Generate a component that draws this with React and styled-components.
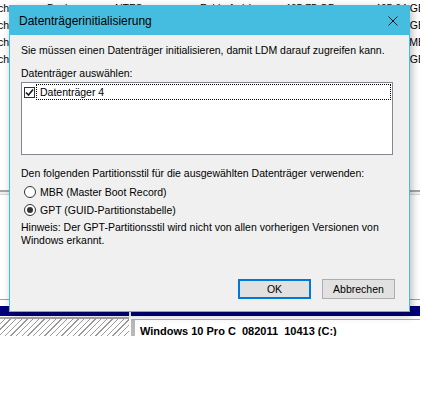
import React from "react";
import styled, { createGlobalStyle } from "styled-components";

const GlobalStyle = createGlobalStyle`
  body {
    margin: 0;
    background: #ffffff;
    font-family: "Liberation Sans", Arial, sans-serif;
  }
`;

const volumes = [
  { layout: "Einfach", type: "Basis", fs: "NTFS", status: "Fehlerfrei (...", cap: "465,75 GB", free: "465,64 GB" },
  { layout: "Einfach", type: "Basis", fs: "NTFS", status: "Fehlerfrei (...", cap: "931,39 GB", free: "512,18 GB" },
  { layout: "Einfach", type: "Basis", fs: "NTFS", status: "Fehlerfrei (...", cap: "350 MB", free: "318 MB" },
  { layout: "Einfach", type: "Basis", fs: "NTFS", status: "Fehlerfrei (...", cap: "1863,01 GB", free: "1201,44 GB" },
];

const App = () => {
  return (
    <Stage>
      <GlobalStyle />
      <BackWindow>
        <VolumeList>
          {volumes.map((v, i) => (
            <VolumeRow key={i}>
              <LayoutCell>
                <span>{v.layout}</span>
              </LayoutCell>
              <Cell>{v.type}</Cell>
              <Cell>{v.fs}</Cell>
              <Cell>{v.status}</Cell>
              <Cell right>{v.cap}</Cell>
              <Cell right>{v.free}</Cell>
            </VolumeRow>
          ))}
        </VolumeList>
        <Splitter />
        <DiskPane>
          <DiskLine />
          <DiskRow>
            <Partition width="129px">
              <PartHead />
              <HatchBody />
            </Partition>
            <Partition>
              <PartHead />
              <VolumeBody>
                <VolumeBox>Windows 10 Pro C_082011_10413 (C:)</VolumeBox>
              </VolumeBody>
            </Partition>
          </DiskRow>
        </DiskPane>
      </BackWindow>

      <Dialog>
        <TitleBar>
          <Title>Datenträgerinitialisierung</Title>
          <svg width="10" height="10" viewBox="0 0 10 10">
            <path d="M0.5 0.5 L9.5 9.5 M9.5 0.5 L0.5 9.5" stroke="#1a1a1a" strokeWidth="1" fill="none" />
          </svg>
        </TitleBar>
        <Body>
          <Text top="9px">Sie müssen einen Datenträger initialisieren, damit LDM darauf zugreifen kann.</Text>
          <Text top="10px">Datenträger auswählen:</Text>
          <ListBox>
            <ListItem>
              <CheckBox>
                <svg width="9" height="9" viewBox="0 0 9 9">
                  <path d="M1 4.5 L3.5 7 L8 1.5" stroke="#1a1a1a" strokeWidth="1.6" fill="none" />
                </svg>
              </CheckBox>
              <FocusLabel>Datenträger 4</FocusLabel>
            </ListItem>
          </ListBox>
          <Text top="12px">Den folgenden Partitionsstil für die ausgewählten Datenträger verwenden:</Text>
          <RadioGroup>
            <RadioRow>
              <Radio />
              MBR (Master Boot Record)
            </RadioRow>
            <RadioRow>
              <Radio checked />
              GPT (GUID-Partitionstabelle)
            </RadioRow>
          </RadioGroup>
          <Text top="2px">
            Hinweis: Der GPT-Partitionsstil wird nicht von allen vorherigen Versionen von
            <br />
            Windows erkannt.
          </Text>
          <ButtonRow>
            <Button primary>OK</Button>
            <Button>Abbrechen</Button>
          </ButtonRow>
        </Body>
      </Dialog>
    </Stage>
  );
};

const Stage = styled.div`
  position: relative;
  width: 434px;
  height: 403px;
  overflow: hidden;
`;

const BackWindow = styled.div`
  width: 420px;
  height: 336px;
  overflow: hidden;
  display: flex;
  flex-direction: column;
  background: #ffffff;
`;

const VolumeList = styled.div`
  width: 425px;
  height: 190px;
  flex-shrink: 0;
`;

const VolumeRow = styled.div`
  display: grid;
  grid-template-columns: 47px 68px 85px 77px 58px 1fr;
  height: 17px;
  line-height: 17px;
  font-size: 10.5px;
  color: #000;
`;

const Cell = styled.div`
  white-space: nowrap;
  overflow: hidden;
  text-align: ${(p) => (p.right ? "right" : "left")};
`;

const LayoutCell = styled.div`
  display: flex;
  justify-content: flex-end;
  padding-right: 38px;
  white-space: nowrap;
  overflow: hidden;
`;

const Splitter = styled.div`
  height: 5px;
  flex-shrink: 0;
  background: #f0f0f0;
  border-top: 2px solid #a6a6a6;
  border-bottom: 1px solid #d6d6d6;
  box-sizing: border-box;
`;

const DiskPane = styled.div`
  flex: 1;
  display: flex;
  flex-direction: column;
  padding-top: 104px;
`;

const DiskLine = styled.div`
  height: 1px;
  background: #a0a0a0;
  margin-bottom: 6px;
`;

const DiskRow = styled.div`
  flex: 1;
  display: flex;
  gap: 2px;
`;

const Partition = styled.div`
  display: flex;
  flex-direction: column;
  width: ${(p) => p.width || "auto"};
  flex: ${(p) => (p.width ? "none" : "1")};
`;

const PartHead = styled.div`
  height: 10px;
  background: #00007d;
`;

const HatchBody = styled.div`
  flex: 1;
  border-top: 2px solid #a8a8a8;
  margin-top: 1px;
  background: repeating-linear-gradient(
    135deg,
    #ffffff 0px,
    #ffffff 3px,
    #9a9a9a 3px,
    #9a9a9a 4px
  );
`;

const VolumeBody = styled.div`
  flex: 1;
  padding-top: 3px;
`;

const VolumeBox = styled.div`
  height: 100%;
  box-sizing: border-box;
  border-top: 1px solid #b0b0b0;
  border-left: 4px solid #b8b8b8;
  padding: 4px 0 0 5px;
  font-weight: bold;
  font-size: 11px;
  line-height: 15px;
  white-space: nowrap;
  overflow: hidden;
  color: #000;
`;

const Dialog = styled.div`
  position: absolute;
  left: 9px;
  top: 5px;
  width: 401px;
  height: 307px;
  box-sizing: border-box;
  border: 1px solid #45bde0;
  background: #f0f0f0;
  display: flex;
  flex-direction: column;
  box-shadow: 2px 3px 8px rgba(0, 0, 0, 0.28);
`;

const TitleBar = styled.div`
  height: 29px;
  flex-shrink: 0;
  background: #45bde0;
  display: flex;
  align-items: center;
  justify-content: space-between;
  padding: 0 11px 0 9px;
`;

const Title = styled.div`
  font-size: 12px;
  color: #000;
`;

const Body = styled.div`
  flex: 1;
  display: flex;
  flex-direction: column;
  padding: 0 16px 12px 11px;
  font-size: 10.5px;
  color: #000;
`;

const Text = styled.div`
  margin-top: ${(p) => p.top};
  line-height: 13px;
  white-space: nowrap;
`;

const ListBox = styled.div`
  margin-top: 2px;
  height: 73px;
  box-sizing: border-box;
  border: 1px solid #828790;
  background: #ffffff;
  padding: 1px 1px 0 2px;
`;

const ListItem = styled.div`
  display: flex;
  align-items: center;
  height: 16px;
  gap: 1px;
`;

const CheckBox = styled.div`
  width: 11px;
  height: 11px;
  box-sizing: border-box;
  border: 1px solid #333;
  background: #fff;
  display: flex;
  align-items: center;
  justify-content: center;
`;

const FocusLabel = styled.div`
  flex: 1;
  height: 16px;
  box-sizing: border-box;
  border: 1px dotted #000;
  padding-left: 3px;
  line-height: 14px;
  font-size: 10.5px;
`;

const RadioGroup = styled.div`
  margin-top: 3px;
  display: flex;
  flex-direction: column;
`;

const RadioRow = styled.div`
  display: flex;
  align-items: center;
  gap: 4px;
  height: 18px;
  padding-left: 3px;
`;

const Radio = styled.span`
  width: 12px;
  height: 12px;
  box-sizing: border-box;
  border-radius: 50%;
  border: 1px solid #333;
  background: #fff;
  display: flex;
  align-items: center;
  justify-content: center;

  &::after {
    content: "";
    width: 6px;
    height: 6px;
    border-radius: 50%;
    background: ${(p) => (p.checked ? "#333" : "transparent")};
  }
`;

const ButtonRow = styled.div`
  margin-top: auto;
  margin-right: -2px;
  display: flex;
  justify-content: flex-end;
  gap: 11px;
`;

const Button = styled.button`
  width: 73px;
  height: 20px;
  box-sizing: border-box;
  background: #e1e1e1;
  border: ${(p) => (p.primary ? "2px solid #0078d7" : "1px solid #adadad")};
  font-family: "Liberation Sans", Arial, sans-serif;
  font-size: 10.5px;
  color: #000;
  padding: 0;
`;

export default App;
